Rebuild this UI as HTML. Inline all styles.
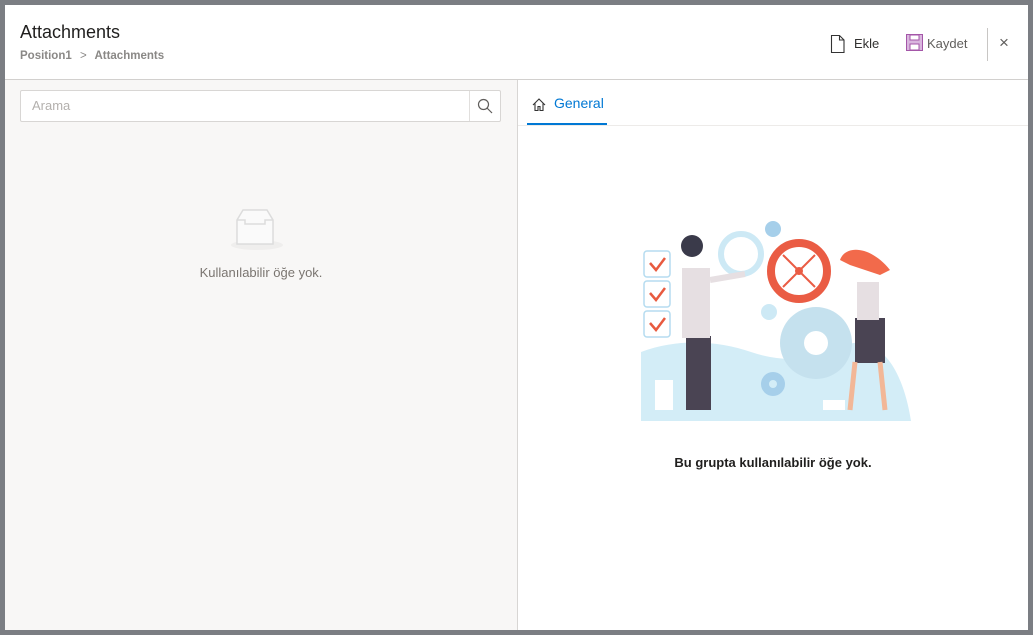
<!DOCTYPE html>
<html><head><meta charset="utf-8"><style>
*{margin:0;padding:0;box-sizing:border-box}
body{width:1033px;height:635px;background:#7b7e83;font-family:"Liberation Sans",sans-serif;position:relative;overflow:hidden}
.dlg{position:absolute;left:5px;top:5px;width:1023px;height:625px;background:#fff}
.abs{position:absolute}
</style></head><body>
<div class="dlg">
 <div class="abs" style="left:15px;top:17px;font-size:18px;color:#201f1e">Attachments</div>
 <div class="abs" style="left:15px;top:45px;font-size:11.5px;color:#8a8886;font-weight:bold">Position1 <span style="font-weight:normal;margin:0 5px">&gt;</span> Attachments</div>
 <svg class="abs" style="left:825px;top:29px" width="16" height="20"><path d="M1.5 1.5h8l4.5 4.5v12.5h-12.5z M9.5 1.5v4.5h4.5" fill="none" stroke="#333" stroke-width="1.1"/></svg>
 <div class="abs" style="left:849px;top:31px;font-size:13px;color:#323130">Ekle</div>
 <svg class="abs" style="left:901px;top:29px" width="17" height="17"><rect x="0.5" y="0.5" width="16" height="16" fill="#d9b6de" stroke="#a456a8"/><rect x="4" y="1" width="9" height="5" fill="#fff" stroke="#a456a8"/><rect x="4" y="10" width="9" height="6" fill="#fff" stroke="#a456a8"/></svg>
 <div class="abs" style="left:922px;top:31px;font-size:13px;color:#605e5c">Kaydet</div>
 <div class="abs" style="left:982px;top:23px;width:1px;height:33px;background:#c8c6c4"></div>
 <div class="abs" style="left:994px;top:28px;font-size:17px;color:#605e5c">×</div>
 <div class="abs" style="left:0;top:74px;width:1023px;height:1px;background:#d2d0ce"></div>
 <div class="abs" style="left:0;top:75px;width:512px;height:550px;background:#f8f7f6"></div>
 <div class="abs" style="left:512px;top:75px;width:1px;height:550px;background:#d8d6d4"></div>
 <div class="abs" style="left:15px;top:85px;width:481px;height:32px;background:#fff;border:1px solid #d8d6d4;border-radius:2px"></div>
 <div class="abs" style="left:464px;top:86px;width:1px;height:30px;background:#e1dfdd"></div>
 <div class="abs" style="left:27px;top:93px;font-size:13px;color:#b3b0ad">Arama</div>
 <svg class="abs" style="left:472px;top:93px" width="16" height="16"><circle cx="6.5" cy="6.5" r="5" fill="none" stroke="#605e5c" stroke-width="1.2"/><path d="M10 10l5 5" stroke="#605e5c" stroke-width="1.2"/></svg>
 <svg class="abs" style="left:222px;top:203px" width="60" height="45"><ellipse cx="30" cy="37" rx="26" ry="5" fill="#efeeed"/><path d="M10 12l6-10h24l6 10v24h-36z" fill="#fafafa" stroke="#dcdcdc" stroke-width="1.5"/><path d="M10 12h8v4h20v-4h8" fill="none" stroke="#dcdcdc" stroke-width="1.5"/></svg>
 <div class="abs" style="left:0;width:512px;top:260px;text-align:center;font-size:13px;color:#7a7570">Kullanılabilir öğe yok.</div>
 <svg class="abs" style="left:527px;top:93px" width="14" height="14"><path d="M1 7l6-6 6 6M3 5.5v7h3v-4h2v4h3v-7" fill="none" stroke="#333" stroke-width="1.1"/></svg>
 <div class="abs" style="left:549px;top:90px;font-size:14px;color:#0078d4">General</div>
 <div class="abs" style="left:513px;top:120px;width:510px;height:1px;background:#edebe9"></div>
 <div class="abs" style="left:522px;top:118px;width:80px;height:2px;background:#0078d4"></div>
 <svg class="abs" style="left:631px;top:205px" width="280" height="215" viewBox="636 210 280 215">
  <path d="M641 421V352c40-15 80-10 110 0s60 10 90-5 60 10 70 74z" fill="#d3edf7"/>
  <g fill="#fff" stroke="#b5dcf0" stroke-width="1.5"><rect x="644" y="251" width="26" height="26" rx="3"/><rect x="644" y="281" width="26" height="26" rx="3"/><rect x="644" y="311" width="26" height="26" rx="3"/></g>
  <path d="M650 263l6 7 9-12M650 293l6 7 9-12M650 323l6 7 9-12" fill="none" stroke="#e85a3f" stroke-width="2.5"/>
  <circle cx="816" cy="343" r="36" fill="#c5e1ee"/><circle cx="816" cy="343" r="12" fill="#fff"/>
  <circle cx="799" cy="271" r="28" fill="none" stroke="#ea5c44" stroke-width="8"/><circle cx="799" cy="271" r="4" fill="#ea5c44"/>
  <path d="M783 255l32 32M815 255l-32 32" stroke="#ea5c44" stroke-width="2"/>
  <circle cx="741" cy="254" r="20" fill="none" stroke="#cde9f5" stroke-width="6"/>
  <circle cx="773" cy="229" r="8" fill="#a6cfea"/><circle cx="769" cy="312" r="8" fill="#cde9f5"/><circle cx="773" cy="384" r="12" fill="#a6cfea"/><circle cx="773" cy="384" r="4" fill="#d3edf7"/>
  <path d="M655 410v-30h18v30z" fill="#fff"/>
  <path d="M686 336h25v74h-25z" fill="#4a4453"/><path d="M682 268h28v70h-28z" fill="#e6dfe2"/>
  <circle cx="692" cy="246" r="11" fill="#3a3a4a"/><path d="M710 280l35-6" stroke="#e6dfe2" stroke-width="6"/>
  <path d="M855 318h30v45h-30z" fill="#4a4453"/><path d="M857 282h22v38h-22z" fill="#e6dfe2"/>
  <path d="M840 260c5-15 30-15 50 10l-10 5-30-10z" fill="#f26a4b"/>
  <path d="M855 362l-5 48M880 362l5 48" stroke="#f2b797" stroke-width="5"/>
  <path d="M823 410v-10h22v10z" fill="#fff"/>
 </svg>
 <div class="abs" style="left:513px;width:510px;top:450px;text-align:center;font-size:13px;font-weight:bold;color:#201f1e">Bu grupta kullanılabilir öğe yok.</div>
</div>
</body></html>
